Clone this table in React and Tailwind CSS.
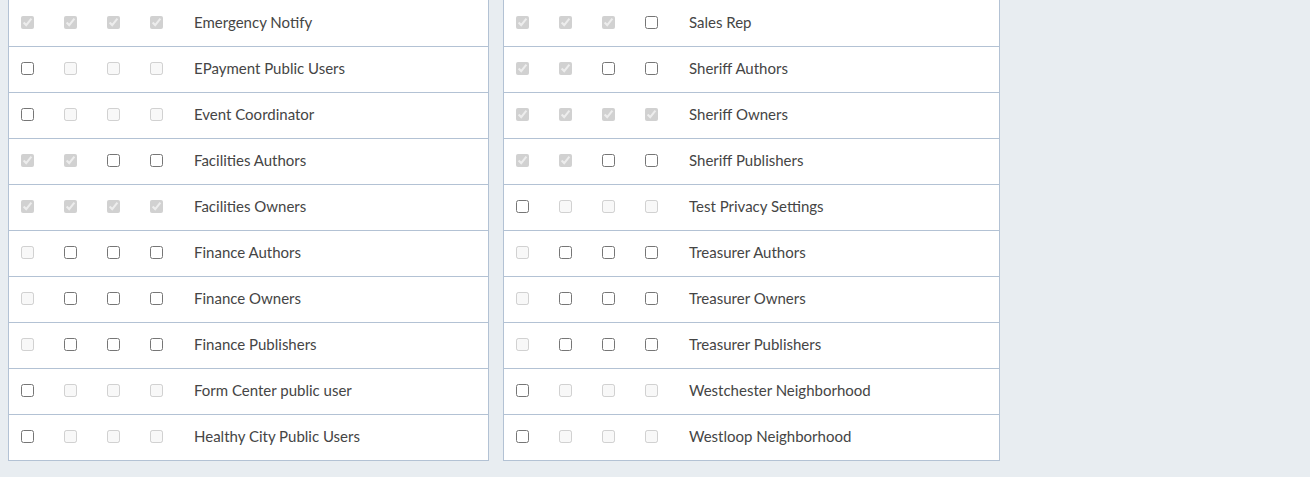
import React from 'react'

// c = disabled checked, o = enabled unchecked, d = disabled unchecked
const izquierda = [
  ['Emergency Notify', 'cccc'],
  ['EPayment Public Users', 'oddd'],
  ['Event Coordinator', 'oddd'],
  ['Facilities Authors', 'ccoo'],
  ['Facilities Owners', 'cccc'],
  ['Finance Authors', 'dooo'],
  ['Finance Owners', 'dooo'],
  ['Finance Publishers', 'dooo'],
  ['Form Center public user', 'oddd'],
  ['Healthy City Public Users', 'oddd'],
]

const derecha = [
  ['Sales Rep', 'ccco'],
  ['Sheriff Authors', 'ccoo'],
  ['Sheriff Owners', 'cccc'],
  ['Sheriff Publishers', 'ccoo'],
  ['Test Privacy Settings', 'oddd'],
  ['Treasurer Authors', 'dooo'],
  ['Treasurer Owners', 'dooo'],
  ['Treasurer Publishers', 'dooo'],
  ['Westchester Neighborhood', 'oddd'],
  ['Westloop Neighborhood', 'oddd'],
]

function Fila({ nombre, estados }) {
  return (
    <div className="flex items-center h-[46px] border-b border-[#b3c2d4] pl-3 pb-[2px]">
      {estados.split('').map((e, i) => (
        <div key={i} className={i === 3 ? 'w-[44px] flex items-center' : 'w-[43px] flex items-center'}>
          <input
            type="checkbox"
            className="w-[13px] h-[13px]"
            defaultChecked={e === 'c'}
            disabled={e !== 'o'}
          />
        </div>
      ))}
      <span className="text-[15px] text-[#454545] leading-none">{nombre}</span>
    </div>
  )
}

function Panel({ filas, ancho }) {
  return (
    <div className={`${ancho} bg-white border-x border-[#b3c2d4] pt-px self-start`}>
      {filas.map(([n, e]) => (
        <Fila key={n} nombre={n} estados={e} />
      ))}
    </div>
  )
}

export default function App() {
  return (
    <div
      className="w-[1310px] h-[477px] bg-[#e8edf1] flex gap-[14px] pl-2"
      style={{ fontFamily: 'Lato, "Open Sans", sans-serif' }}
    >
      <Panel filas={izquierda} ancho="w-[481px]" />
      <Panel filas={derecha} ancho="w-[497px]" />
    </div>
  )
}
